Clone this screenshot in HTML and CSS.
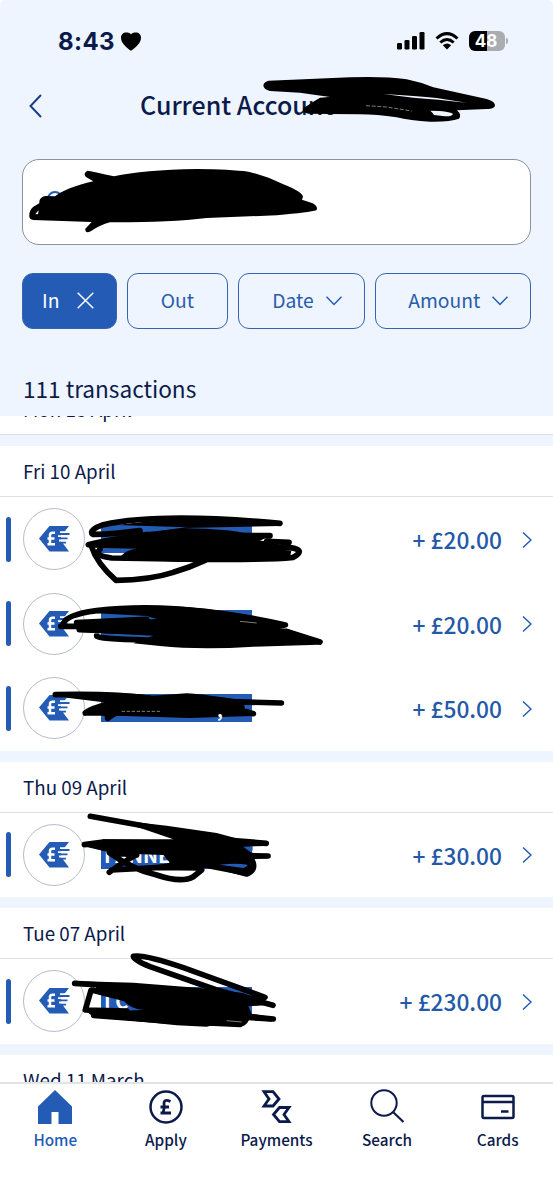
FILE: index.html
```html
<!DOCTYPE html>
<html lang="en">
<head>
<meta charset="utf-8">
<title>Current Account</title>
<link rel="stylesheet" href="styles.css">
</head>
<body>
<svg class="defs" width="0" height="0">
  <symbol id="transfer" viewBox="0 0 31 26">
    <path fill="#235bb5" d="M0 12.500 10.500 0H30L24.500 7H30.500V9H22V11.500H28.500V13.500H22V15.500H27V17.500H24L30 25.500H10.500Z"/>
    <path fill="none" stroke="#fff" stroke-width="1.800" d="M21 6.200H30M19 10.200H31M20 14.500H29"/>
    <path fill="none" stroke="#fff" stroke-width="2.500" d="M16 6.700H13.500Q11 6.700 11 9V18.700M8.500 12.600H15.500M8.500 18.300H16"/>
  </symbol>
  <symbol id="next" viewBox="0 0 10 18"><path fill="none" stroke="#235bb5" stroke-width="1.500" d="M1 1.500 9 9 1 16.500"/></symbol>
  <symbol id="down" viewBox="0 0 16 10"><path fill="none" stroke="#235bb5" stroke-width="1.500" d="M.5.800 8 8.500 15.500.800"/></symbol>
</svg>
<div class="screen">
  <header class="top">
    <div class="status">
      <span class="clock">8:43</span>
      <svg class="heart" width="20" height="19" viewBox="0 0 20 19"><path d="M10 18.800C5 15 0 11 0 5.700C0 2.500 2.300.500 5 .500C7.300.500 9.200 1 10 2.500C10.800 1 12.700.500 15 .500C17.700.500 20 2.500 20 5.700C20 11 15 15 10 18.800Z"/></svg>
      <svg class="signal" width="28" height="18" viewBox="0 0 28 18"><rect y="11" width="5" height="6.500" rx="1.300"/><rect x="7.500" y="8" width="5" height="9.500" rx="1.300"/><rect x="15" y="4" width="5" height="13.500" rx="1.300"/><rect x="22.500" width="5" height="17.500" rx="1.300"/></svg>
      <svg class="wifi" width="24" height="18" viewBox="0 0 24 18"><g fill="none" stroke="#000" stroke-width="3"><path d="M1.500 6.500Q12-3.300 22.500 6.500"/><path d="M5.300 10.500Q12 4.500 18.700 10.500"/></g><path d="M12 17.500 7.800 13.300Q12 9.800 16.200 13.300Z"/></svg>
      <span class="battery"><span>48</span></span><i class="battery-tip"></i>
    </div>
    <div class="title-row">
      <svg width="13" height="24" viewBox="0 0 13 24"><path fill="none" stroke="#173f86" stroke-width="2" d="M12 1 1.500 12 12 23"/></svg>
      <h1>Current Account</h1>
    </div>
    <div class="search"><svg width="20" height="20" viewBox="0 0 20 20"><circle cx="8" cy="8" r="7" fill="none" stroke="#235bb5" stroke-width="2"/></svg></div>
    <div class="filters">
      <button class="chip chip-on"><span>In</span><svg width="17" height="17" viewBox="0 0 17 17"><path stroke="#fff" stroke-width="1.500" d="M.7.700 16.300 16.300M16.300.700.700 16.300"/></svg></button>
      <button class="chip chip-out"><span>Out</span></button>
      <button class="chip chip-date"><span>Date</span><svg width="16" height="10"><use href="#down"/></svg></button>
      <button class="chip chip-amount"><span>Amount</span><svg width="16" height="10"><use href="#down"/></svg></button>
    </div>
    <p class="count">111 transactions</p>
  </header>
  <main class="list">
    <div class="past"><span>Mon 13 April</span></div>
    <section>
      <h2>Fri 10 April</h2>
      <div class="row"><i></i><span class="badge"><svg width="31" height="26"><use href="#transfer"/></svg></span><span class="name"></span><b>+ £20.00</b><svg width="10" height="18"><use href="#next"/></svg></div>
      <div class="row"><i></i><span class="badge"><svg width="31" height="26"><use href="#transfer"/></svg></span><span class="name"></span><b>+ £20.00</b><svg width="10" height="18"><use href="#next"/></svg></div>
      <div class="row"><i></i><span class="badge"><svg width="31" height="26"><use href="#transfer"/></svg></span><span class="name"></span><b>+ £50.00</b><svg width="10" height="18"><use href="#next"/></svg></div>
    </section>
    <section>
      <h2>Thu 09 April</h2>
      <div class="row"><i></i><span class="badge"><svg width="31" height="26"><use href="#transfer"/></svg></span><span class="name">I ANNE</span><b>+ £30.00</b><svg width="10" height="18"><use href="#next"/></svg></div>
    </section>
    <section>
      <h2>Tue 07 April</h2>
      <div class="row"><i></i><span class="badge"><svg width="31" height="26"><use href="#transfer"/></svg></span><span class="name">I C</span><b>+ £230.00</b><svg width="10" height="18"><use href="#next"/></svg></div>
    </section>
    <section><h2>Wed 11 March</h2></section>
  </main>
  <nav class="tabs">
    <a class="tab tab-on"><svg width="36" height="36" viewBox="0 0 36 36"><path fill="#235bb5" d="M18 1 35 17.500V35H21.500V23H14.500V35H1V17.500Z"/></svg><span>Home</span></a>
    <a class="tab"><svg width="36" height="36" viewBox="0 0 36 36"><circle cx="18" cy="18" r="15.500" fill="none" stroke="#0b1a4b" stroke-width="2.500"/><path fill="none" stroke="#0b1a4b" stroke-width="2.800" d="M22.500 12.500Q16 9.500 16 14.500Q17 19 15 24M12.500 24H23M12.500 18H21"/></svg><span>Apply</span></a>
    <a class="tab"><svg width="36" height="36" viewBox="0 0 36 36"><path fill="none" stroke="#0b1a4b" stroke-width="2.800" d="M6 2.700H15L21 10 15 17H6L11 10Z M31 18.500H21.500L15.500 25.500 21.500 32.700H31L26 25.500Z"/></svg><span>Payments</span></a>
    <a class="tab"><svg width="36" height="36" viewBox="0 0 36 36"><circle cx="15" cy="14" r="12.700" fill="none" stroke="#0b1a4b" stroke-width="2"/><path stroke="#0b1a4b" stroke-width="2.200" d="M24 23 34.500 33"/></svg><span>Search</span></a>
    <a class="tab"><svg width="36" height="36" viewBox="0 0 36 36"><rect x="2.500" y="7" width="31" height="22" rx="1.500" fill="none" stroke="#0b1a4b" stroke-width="2.500"/><path stroke="#0b1a4b" stroke-width="2.500" d="M2.500 13H33.500M21 22.500H28.500"/></svg><span>Cards</span></a>
  </nav>
  <svg class="ink" width="553" height="1200" viewBox="0 0 553 1200">
    <g transform="translate(250 0) scale(.33333)">
      <path d="M56 242Q180 238 300 232Q400 228 470 238Q510 246 550 262L710 297Q737 305 735 318Q730 328 710 327L621 331Q636 345 627 356Q600 366 540 365Q480 362 440 352Q380 343 330 343L240 342 175 341Q155 338 160 325L190 305 210 293 240 291 150 278 60 273Q40 268 40 256Q42 245 56 242Z"/>
      <path fill="#eef5ff" d="M400 282Q500 288 560 294L650 308Q560 298 490 293ZM541 332Q600 333 609 342Q606 350 585 349L552 345Q548 338 541 332Z"/>
      <path class="hair" stroke="#d5def5" stroke-dasharray="12 5" d="M348 317 410 321 485 333"/>
    </g>
    <g transform="translate(0 150) scale(.33333)">
      <path d="M88 195Q88 180 100 170L118 160Q116 142 136 138L165 139Q200 112 280 94L258 81Q248 70 262 62Q285 66 342 79Q430 60 590 57Q690 58 745 65Q800 78 850 103Q906 125 909 140L906 149 938 160Q956 171 949 181Q930 187 830 196L620 204Q500 218 330 217Q300 225 272 244Q255 252 256 236L275 216 100 210Q86 208 88 195Z"/>
      <path fill="#fff" d="M106 192 116 181 114 193Z"/>
    </g>
    <g transform="translate(0 500) scale(.33333)">
      <g class="pen">
        <path d="M840 70Q480 37 310 74Q265 90 278 103Q330 104 420 92"/>
        <path d="M274 138Q290 190 348 241Q450 240 520 217Q570 202 615 181"/>
        <path d="M300 148Q280 168 335 174L600 178Q800 180 880 172Q920 150 870 143L800 142"/>
        <path d="M265 134Q320 120 440 104L810 107M800 124 867 127"/>
      </g>
      <path d="M350 75Q560 47 750 65L840 78 550 84Q700 88 740 101L810 107 780 122 865 127 800 143 874 152 870 170 800 180Q600 190 480 182L360 172Q375 150 410 146L280 143 265 130 420 100 560 82Z"/>
      <g class="pen">
        <path d="M188 377Q190 345 290 332Q440 314 620 335Q750 350 856 375Q850 382 740 371"/>
        <path d="M182 379H250M230 368 440 358M290 407Q290 417 440 420M238 389 340 393M860 394 960 426"/>
      </g>
      <path d="M290 340 330 326Q480 310 620 327L760 351 800 380 860 386 960 420Q970 430 955 434L760 440Q600 450 480 438L400 430Q430 415 460 407L340 401 240 395 222 365 470 357 440 348Z"/>
      <path class="hair" d="M720 364 770 369"/>
    </g>
    <g transform="translate(0 650) scale(.33333)">
      <g class="pen"><path d="M166 134Q340 130 450 145L580 152 844 159M256 189H500M256 189Q280 171 350 157M335 185 323 205M740 185 760 191"/></g>
      <path d="M200 126Q350 125 460 137L560 130Q610 132 730 152L735 177 765 187 755 198 570 204 350 197 325 213 310 195 260 193 330 159 200 143Z"/>
      <path class="hair" stroke="#aab8d8" stroke-dasharray="10 5" d="M365 184H480"/>
      <text class="mark" x="651" y="201">,</text>
    </g>
    <g transform="translate(0 800) scale(.33333)">
      <g class="pen"><path d="M271 49 500 90 680 120 799 130M253 134 310 126 540 130M804 168 650 165M328 158Q400 210 470 225Q545 250 580 230L605 210M328 217Q380 178 410 165L328 158M335 210 480 202 600 204M620 190 740 222Q770 210 757 182L660 175"/></g>
      <path d="M350 60 500 77 650 99 750 126 799 138 730 140 750 155 804 175 700 180 750 186 758 214 740 228 620 205 430 207 400 203Q480 195 510 188L490 165 340 160 260 141 310 118 520 118Z"/>
      <path fill="#235bb5" d="M658 194Q710 188 742 194Q742 200 730 204ZM735 144 758 139V152Z"/>
    </g>
    <g transform="translate(0 910) scale(.33333)">
      <g class="pen"><path d="M224 220 300 225 400 233M819 286 650 240 450 170Q400 150 400 139Q430 132 550 173L795 262 700 268M273 241 256 300 380 303M281 316 500 333 720 343Q740 335 740 320M820 327 740 319M278 241 380 267"/></g>
      <path d="M225 213 400 218 590 233 730 249 818 284 745 289 755 311 822 323 815 335 742 331Q740 350 715 350L650 343 620 350 530 346 280 320 260 305 430 300Q390 297 370 271L275 246 290 230Z"/>
      <path class="hair" d="M680 332 725 336"/>
    </g>
  </svg>
</div>
</body>
</html>
```
FILE: styles.css
```css
* { box-sizing: border-box; }
body { margin: 0; background: #fff; }
.defs { position: absolute; }
.screen {
  position: relative;
  width: 553px;
  height: 1200px;
  overflow: hidden;
  display: flex;
  flex-direction: column;
  color: #0b1a4b;
  font-family: "Noto Sans CJK SC", "Open Sans", sans-serif;
}
.top { flex: none; height: 416px; background: #eef5ff; border-radius: 5px 5px 0 0; }
.status { display: flex; align-items: center; height: 82px; padding-left: 58px; }
.clock { width: 57px; margin: 2px 6px 0 0; font: 700 24px/28px Inter, sans-serif; letter-spacing: .4px; }
.heart { flex: none; }
.signal { margin-left: 256px; }
.wifi { margin-left: 10px; }
.battery {
  display: flex;
  justify-content: center;
  width: 36px;
  height: 20px;
  margin-left: 10px;
  border-radius: 6px;
  background: linear-gradient(90deg, #000 49%, #a9adb2 49%);
  color: #fff;
  font: 700 17px/20px Inter, sans-serif;
}
.battery span { margin-left: -2px; }
.battery-tip { width: 2px; height: 6px; margin-left: 1px; border-radius: 0 2px 2px 0; background: #a9adb2; }
.title-row { display: flex; align-items: center; height: 48px; padding-left: 29px; }
h1 { margin: -4px 0 0 98px; font-size: 25px; line-height: 48px; font-weight: 500; white-space: nowrap; }
.search { width: 509px; height: 86px; margin: 29.400px 0 0 22px; padding: 31px 24px; border: 1.500px solid #8b90a2; border-radius: 17px; background: #fff; }
.filters { display: flex; gap: 10px; height: 56px; margin: 27.600px 22px 0; }
.chip {
  display: flex;
  align-items: center;
  justify-content: center;
  height: 56px;
  padding: 0;
  border: 1.500px solid #3764b0;
  border-radius: 11px;
  background: none;
  color: #2a5cab;
  font: 400 19.300px/52px "Noto Sans CJK SC", sans-serif;
}
.chip span { margin-top: -2px; }
.chip-on { width: 95px; gap: 17px; padding-right: 3px; background: #235bb5; color: #fff; }
.chip-out { width: 102px; }
.chip-date { width: 127px; gap: 12px; padding-left: 11px; }
.chip-amount { width: 157px; gap: 12px; padding-left: 11px; }
.count { margin: 41px 0 0 23px; font-size: 22.600px; line-height: 38px; white-space: nowrap; }
.list { flex: none; height: 666px; overflow: hidden; background: #eef5ff; }
.past { display: flex; align-items: flex-end; height: 19px; overflow: hidden; border-bottom: 1px solid #dcdfe5; background: #fff; }
.past span { padding-left: 23px; margin-bottom: 11.500px; font-size: 18.900px; line-height: 29px; }
section { margin-top: 11px; background: #fff; }
h2 { height: 51px; margin: 0; padding-left: 23px; border-bottom: 1px solid #dfe1e8; font-size: 18.800px; line-height: 49px; font-weight: 400; }
.row { display: flex; align-items: center; height: 84.500px; padding: 0 21px 0 6px; }
.row i { flex: none; width: 5px; height: 45px; border-radius: 3px; background: #235bb5; }
.badge { flex: none; display: flex; align-items: center; justify-content: center; width: 62px; height: 62px; margin-left: 12px; border: 1.300px solid #b9bcca; border-radius: 50%; }
.name { flex: none; width: 151px; height: 28px; margin-left: 16px; padding-left: 3px; background: #235bb5; color: #fff; font-size: 20px; line-height: 27px; font-weight: 700; }
.row b { margin: 2px 0 0 auto; color: #2459a8; font-size: 22.700px; line-height: 34px; font-weight: 500; white-space: nowrap; }
.row > svg { flex: none; margin: 1px 0 0 20px; }
.tabs { flex: none; display: flex; height: 118px; border-top: 2px solid #e2e3e6; background: #fff; }
.tab { flex: 1; display: flex; flex-direction: column; align-items: center; padding-top: 5px; }
.tab span { font-size: 15.300px; line-height: 24px; margin-top: 2px; font-weight: 500; }
.tab-on { color: #235bb5; }
.ink { position: absolute; top: 0; left: 0; }
.pen { fill: none; stroke: #000; stroke-width: 17; stroke-linecap: round; stroke-linejoin: round; }
.hair { fill: none; stroke: #bbb; stroke-width: 2; }
.mark { fill: #fff; font-size: 54px; font-weight: 700; }
```
